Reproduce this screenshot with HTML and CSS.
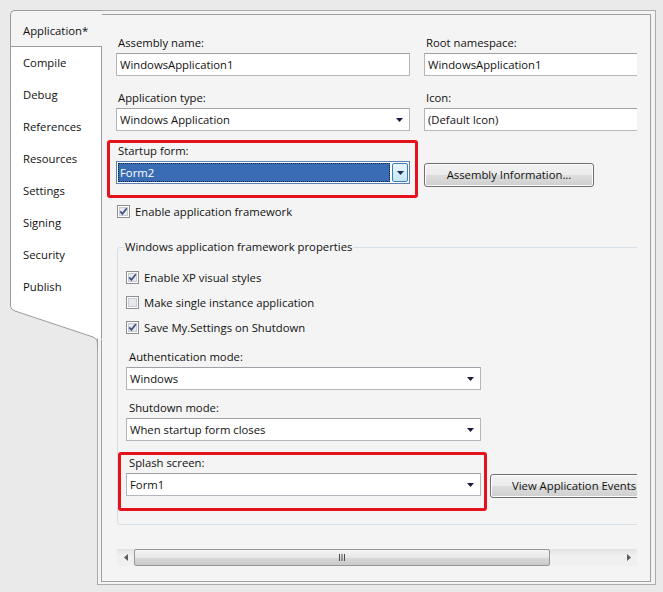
FILE: index.html
```html
<!DOCTYPE html>
<html>
<head>
<meta charset="utf-8">
<title>Application properties</title>
<link rel="stylesheet" href="styles.css">
</head>
<body>
<div class="window">
  <nav class="tabs">
    <div class="tab-active">Application*</div>
    <ul class="tab-list">
      <li>Compile</li>
      <li>Debug</li>
      <li>References</li>
      <li>Resources</li>
      <li>Settings</li>
      <li>Signing</li>
      <li>Security</li>
      <li>Publish</li>
    </ul>
    <svg class="tab-foot" width="92" height="46" viewBox="0 0 92 46">
      <path d="M0 0 H92 V36.7 L5 8 Q0.5 6.5 0.5 3 Z" fill="#fff"/>
      <path d="M0.5 0 V3 Q0.5 6.5 5 8 L83 34 Q87.5 36 87.5 41 V46" fill="none" stroke="#9c9c9c"/>
      <path d="M91.5 0 V36" fill="none" stroke="#9c9c9c"/>
    </svg>
  </nav>

  <div class="frame">
    <div class="panel">
      <div class="viewport">
        <div class="row">
          <div class="field">
            <label>Assembly name:</label>
            <div class="box">WindowsApplication1</div>
          </div>
          <div class="field">
            <label>Root namespace:</label>
            <div class="box">WindowsApplication1</div>
          </div>
        </div>

        <div class="row row-b">
          <div class="field">
            <label>Application type:</label>
            <div class="box combo"><span>Windows Application</span><svg class="arrow" width="7" height="4" viewBox="0 0 7 4"><path d="M0 0H7L3.5 4Z" fill="#1a1a40"/></svg></div>
          </div>
          <div class="field">
            <label>Icon:</label>
            <div class="box">(Default Icon)</div>
          </div>
        </div>

        <div class="row row-c">
          <div class="hl hl-startup">
            <div class="field">
              <label>Startup form:</label>
              <div class="box combo-focus">
                <span class="sel">Form2</span>
                <span class="ddbtn"><svg width="7" height="4" viewBox="0 0 7 4"><path d="M0 0H7L3.5 4Z" fill="#1a2f52"/></svg></span>
              </div>
            </div>
          </div>
          <div class="btn btn-asm">Assembly Information...</div>
        </div>

        <div class="check check-top">
          <svg class="cb" width="13" height="13" viewBox="0 0 13 13"><rect x=".5" y=".5" width="12" height="12" fill="#fdfdfd" stroke="#8e8f8f"/><rect x="2.5" y="2.5" width="8" height="8" fill="#e6e8ec" stroke="#c9ccd2"/><path d="M3.2 6.4 L5.4 8.9 L9.8 3.3" fill="none" stroke="#3f5383" stroke-width="1.7"/></svg>
          <span>Enable application framework</span>
        </div>

        <fieldset class="group">
          <legend>Windows application framework properties</legend>
          <div class="check first">
            <svg class="cb" width="13" height="13" viewBox="0 0 13 13"><rect x=".5" y=".5" width="12" height="12" fill="#fdfdfd" stroke="#8e8f8f"/><rect x="2.5" y="2.5" width="8" height="8" fill="#e6e8ec" stroke="#c9ccd2"/><path d="M3.2 6.4 L5.4 8.9 L9.8 3.3" fill="none" stroke="#3f5383" stroke-width="1.7"/></svg>
            <span>Enable XP visual styles</span>
          </div>
          <div class="check">
            <svg class="cb" width="13" height="13" viewBox="0 0 13 13"><rect x=".5" y=".5" width="12" height="12" fill="#fdfdfd" stroke="#8e8f8f"/><rect x="2.5" y="2.5" width="8" height="8" fill="#e6e8ec" stroke="#c9ccd2"/></svg>
            <span>Make single instance application</span>
          </div>
          <div class="check">
            <svg class="cb" width="13" height="13" viewBox="0 0 13 13"><rect x=".5" y=".5" width="12" height="12" fill="#fdfdfd" stroke="#8e8f8f"/><rect x="2.5" y="2.5" width="8" height="8" fill="#e6e8ec" stroke="#c9ccd2"/><path d="M3.2 6.4 L5.4 8.9 L9.8 3.3" fill="none" stroke="#3f5383" stroke-width="1.7"/></svg>
            <span>Save My.Settings on Shutdown</span>
          </div>

          <div class="field gfield gfield-auth">
            <label>Authentication mode:</label>
            <div class="box combo wide"><span>Windows</span><svg class="arrow" width="7" height="4" viewBox="0 0 7 4"><path d="M0 0H7L3.5 4Z" fill="#1a1a40"/></svg></div>
          </div>
          <div class="field gfield">
            <label>Shutdown mode:</label>
            <div class="box combo wide"><span>When startup form closes</span><svg class="arrow" width="7" height="4" viewBox="0 0 7 4"><path d="M0 0H7L3.5 4Z" fill="#1a1a40"/></svg></div>
          </div>

          <div class="splash-row">
            <div class="hl hl-splash">
              <div class="field">
                <label>Splash screen:</label>
                <div class="box combo wide"><span>Form1</span><svg class="arrow" width="7" height="4" viewBox="0 0 7 4"><path d="M0 0H7L3.5 4Z" fill="#1a1a40"/></svg></div>
              </div>
            </div>
            <div class="btn btn-events">View Application Events</div>
          </div>
        </fieldset>
      </div>

      <div class="hscroll">
        <div class="sb-arrow"><svg width="4" height="7" viewBox="0 0 4 7"><path d="M4 0V7L0 3.5Z" fill="#5c5c5c"/></svg></div>
        <div class="sb-thumb"><svg width="8" height="7" viewBox="0 0 8 7"><path d="M1.5 0V7M4 0V7M6.5 0V7" stroke="#4a4a4a" stroke-width="1"/></svg></div>
        <div class="sb-track"></div>
        <div class="sb-arrow"><svg width="4" height="7" viewBox="0 0 4 7"><path d="M0 0V7L4 3.5Z" fill="#5c5c5c"/></svg></div>
      </div>
    </div>
  </div>
</div>
</body>
</html>
```

FILE: styles.css
```css
* { box-sizing: border-box; }
html, body { margin: 0; padding: 0; }
body {
  width: 663px;
  height: 592px;
  overflow: hidden;
  background: #eaeaea;
  font-family: "Open Sans", "Noto Sans", sans-serif;
  font-size: 11.3px;
  color: #111;
}
.window { display: flex; align-items: flex-start; }

/* left tabs */
.tabs {
  position: relative;
  z-index: 1;
  flex: none;
  width: 92px;
  margin: 10px -5px 0 10px;
}
.tab-active {
  height: 36px;
  background: #f4f4f4;
  border-top: 1px solid #9c9c9c;
  border-left: 1px solid #9c9c9c;
  border-top-left-radius: 5px;
  padding: 12px 0 0 12px;
  line-height: 16px;
}
.tab-list {
  list-style: none;
  margin: 0;
  padding: 0;
  background: #fff;
  border: 1px solid #9c9c9c;
  border-bottom: none;
}
.tab-list li { height: 32px; line-height: 32px; padding-left: 12px; }
.tab-foot { display: block; }

/* frame */
.frame {
  flex: none;
  width: 559px;
  height: 575px;
  margin-top: 10px;
  border: 1px solid #acacac;
  background: #f3f3f3;
  padding: 3px 4px 2px 3px;
}
.panel {
  height: 100%;
  border: 1px solid #a0a0a0;
  background: #f4f4f4;
}
.viewport {
  width: 535px;
  height: 534px;
  overflow: hidden;
  padding: 20px 0 0 14px;
}

/* rows & fields */
.row {
  display: grid;
  grid-template-columns: 294px 240px;
  column-gap: 14px;
  width: 548px;
}
.row-b { margin-top: 14px; }
.row-c { margin-top: 9px; align-items: start; }

.field label {
  display: block;
  line-height: 16px;
  padding-left: 2px;
  margin-bottom: 2px;
  white-space: nowrap;
}
.box {
  height: 23px;
  background: #fff;
  border: 1px solid #b3b6bc;
  border-top-color: #9ea2a8;
  padding: 0 3px;
  line-height: 21px;
  white-space: nowrap;
}
.combo {
  display: flex;
  align-items: center;
  justify-content: space-between;
  padding-right: 6px;
}
.arrow { flex: none; }
.wide { width: 355px; }

.hl {
  border: 3px solid #e4121b;
  border-radius: 3px;
}
.hl-startup {
  margin: 0 -8px 0 -9px;
  padding: 0 5px 11px 6px;
}
.combo-focus {
  display: flex;
  padding: 1px;
  border-color: #5a7fb4;
}
.sel {
  flex: 1;
  background: #3a6cb5;
  color: #fff;
  outline: 1px dotted #0e2346;
  outline-offset: -1px;
  padding-left: 2px;
  line-height: 19px;
}
.ddbtn {
  flex: none;
  width: 16px;
  margin-left: 2px;
  border: 1px solid #3c7fb1;
  border-radius: 2px;
  background: linear-gradient(#eaf6fd, #c4e5f8);
  display: flex;
  align-items: center;
  justify-content: center;
}

.btn {
  height: 24px;
  border: 1px solid #707070;
  border-radius: 3px;
  background: linear-gradient(#f2f2f2 0%, #ebebeb 50%, #dddddd 51%, #cfcfcf 100%);
  box-shadow: inset 0 0 0 1px #fcfcfc;
  text-align: center;
  line-height: 22px;
  white-space: nowrap;
}
.btn-asm { width: 170px; margin-top: 23px; }

.check {
  display: flex;
  align-items: center;
  height: 16px;
  gap: 5px;
}
.cb { flex: none; }
.check-top { margin: 5px 0 0 1px; }

.group {
  margin: 20px 0 0 1px;
  width: 560px;
  border: 1px solid #d5dfe5;
  border-radius: 3px;
  padding: 0 0 13px 8px;
  min-width: 0;
}
.group legend {
  padding: 0 1px;
  margin-left: -2px;
  line-height: 16px;
}
.group .check { margin-top: 9px; }
.group .check.first { margin-top: 14px; }

.gfield label { padding-left: 3px; }
.gfield { margin-top: 10px; }
.gfield-auth { margin-top: 14px; }

.splash-row {
  display: flex;
  align-items: flex-start;
  margin-top: 11px;
}
.hl-splash {
  margin-left: -8px;
  padding: 0 3px 12px 5px;
}
.hl-splash label { padding-left: 3px; }
.btn-events {
  flex: none;
  width: 174px;
  margin: 22px 0 0 3px;
  text-align: left;
  padding-left: 21px;
}

/* horizontal scrollbar */
.hscroll {
  display: flex;
  width: 520px;
  height: 17px;
  margin-left: 15px;
  background: linear-gradient(#e3e3e3, #f0f0f0 40%, #f0f0f0);
}
.sb-arrow {
  flex: none;
  width: 17px;
  display: flex;
  align-items: center;
  justify-content: center;
}
.sb-thumb {
  flex: none;
  width: 416px;
  border: 1px solid #979797;
  border-radius: 2px;
  background: linear-gradient(#f3f3f3 0%, #e8e8e8 50%, #d9d9d9 51%, #cacaca 100%);
  display: flex;
  align-items: center;
  justify-content: center;
}
.sb-track { flex: 1; }
```
